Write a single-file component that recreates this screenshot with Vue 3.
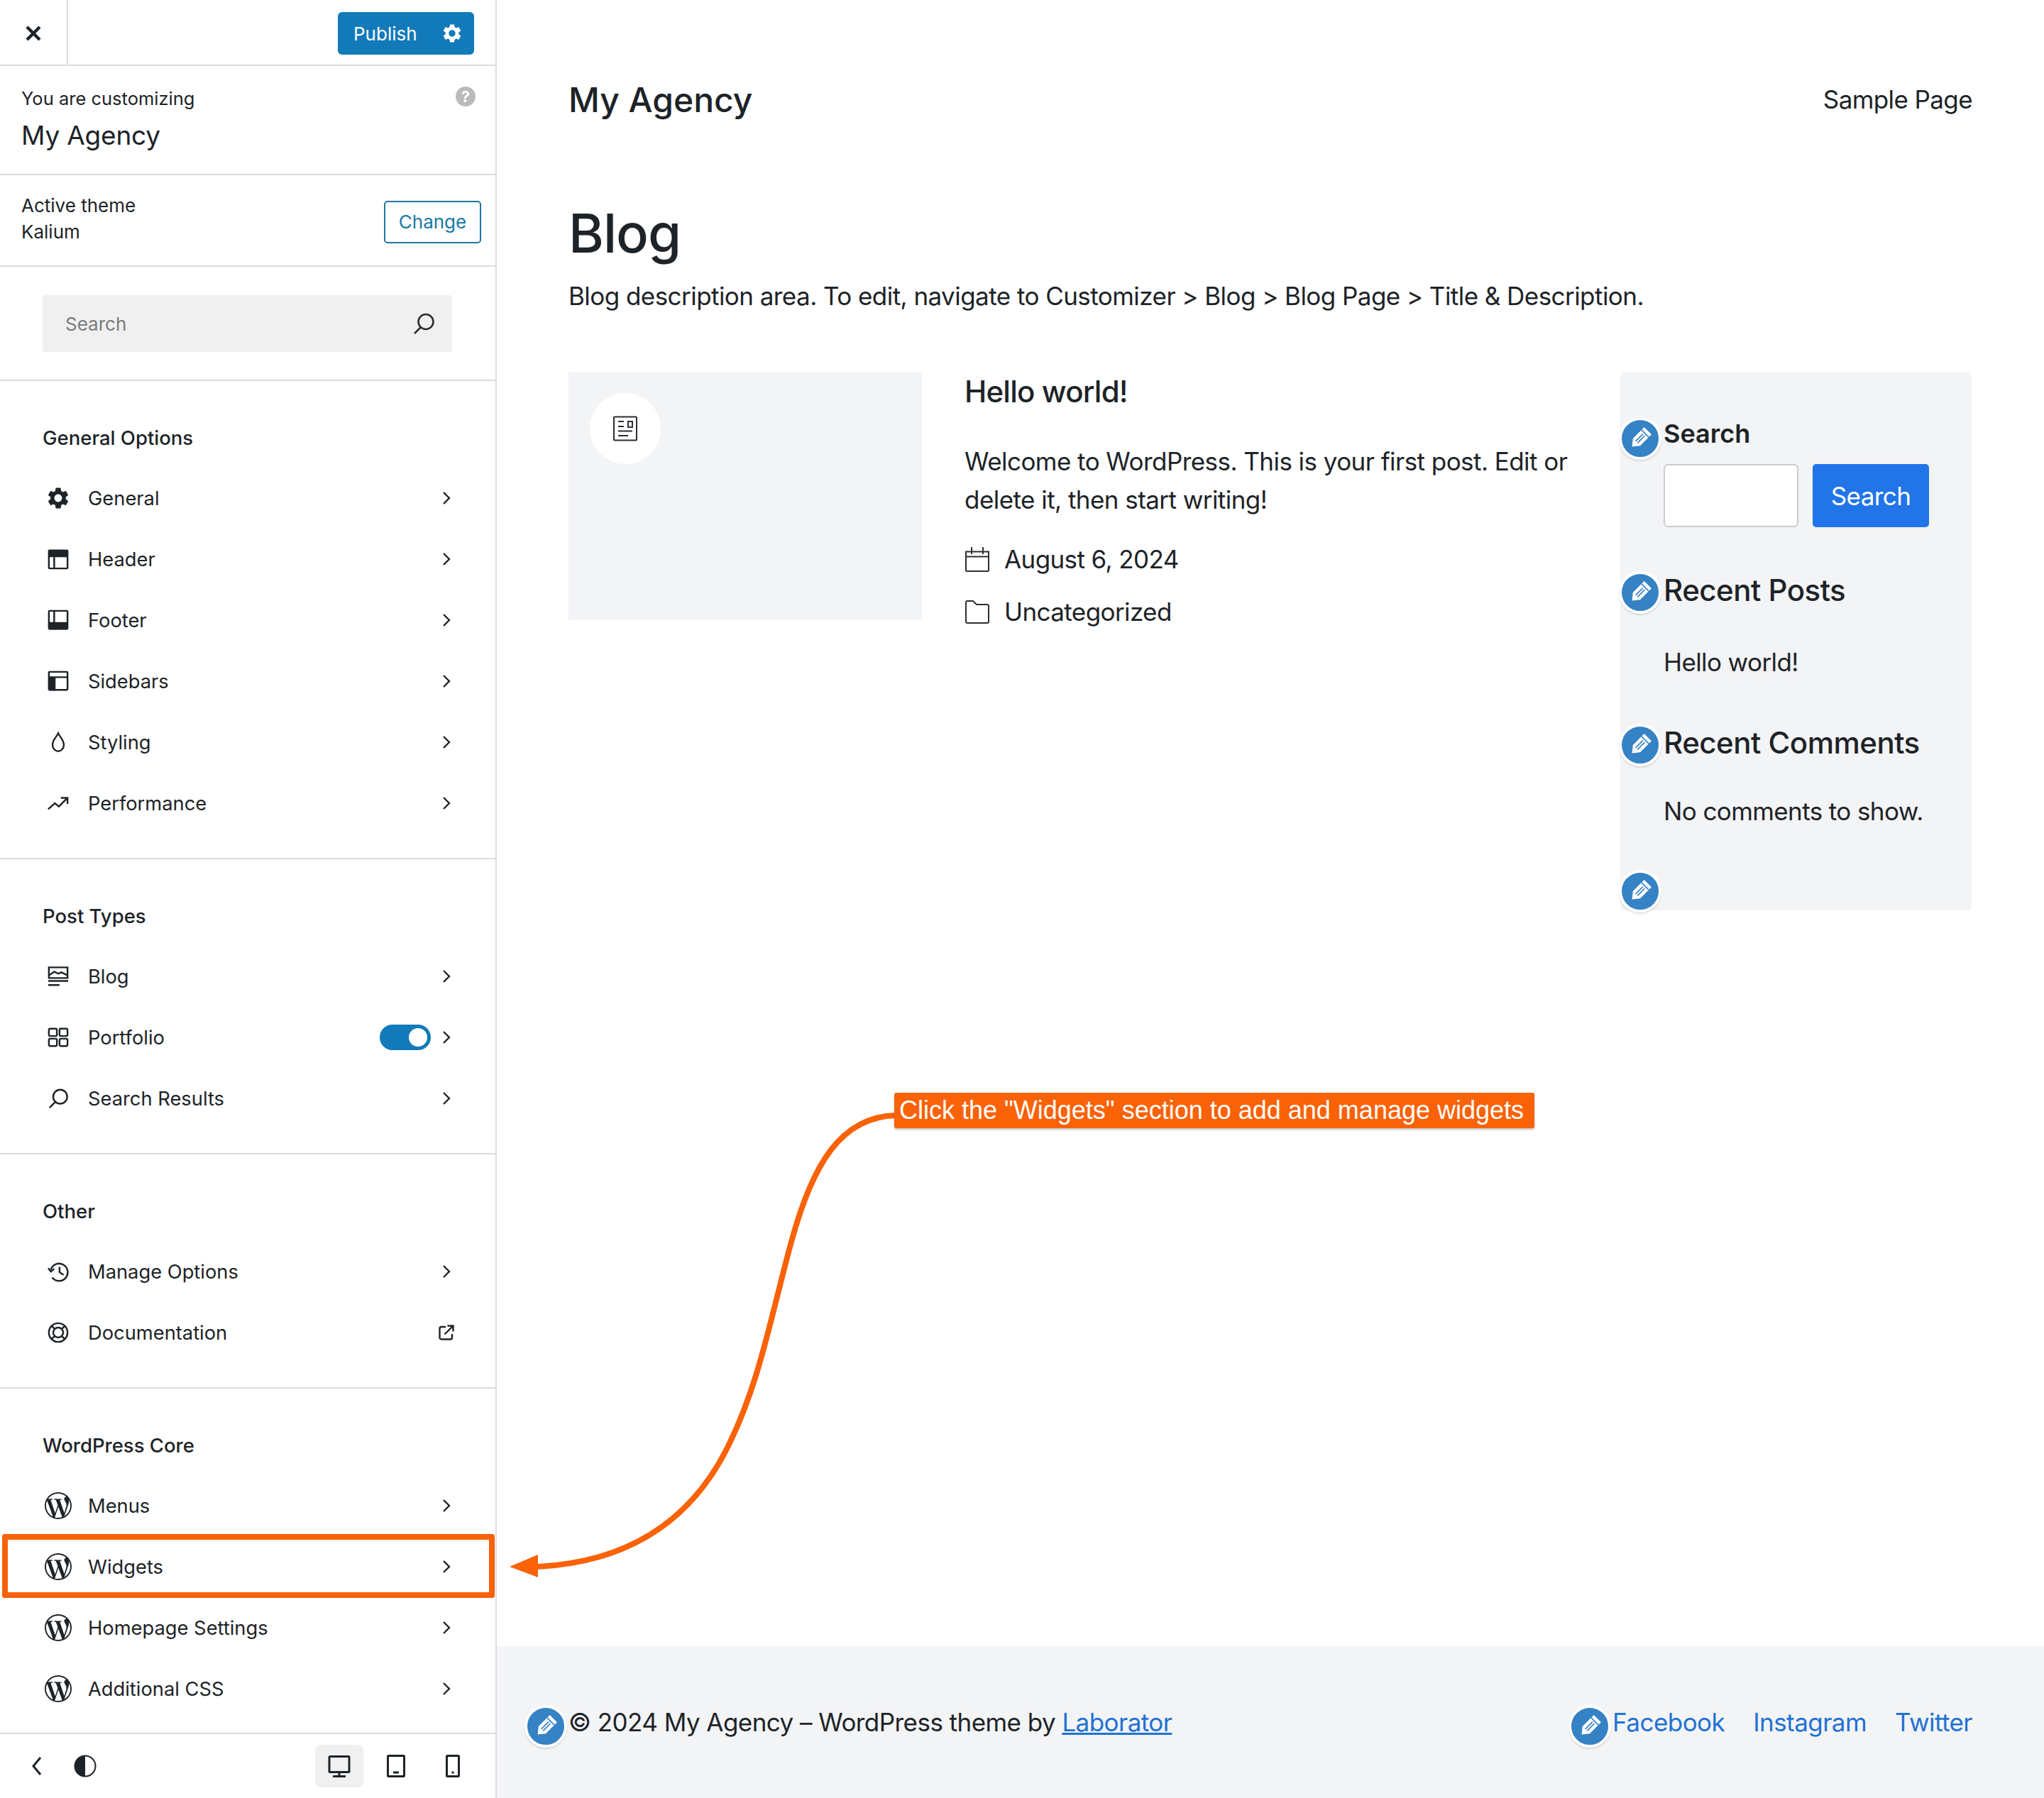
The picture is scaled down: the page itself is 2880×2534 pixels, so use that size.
<script setup>
const wp = 'M21.469 6.825c.84 1.537 1.318 3.3 1.318 5.175 0 3.979-2.156 7.456-5.363 9.325l3.295-9.527c.615-1.54.82-2.771.82-3.864 0-.405-.026-.78-.07-1.11m-7.981.105c.647-.03 1.232-.105 1.232-.105.582-.075.514-.93-.067-.899 0 0-1.755.135-2.88.135-1.064 0-2.85-.15-2.85-.15-.585-.03-.661.855-.075.885 0 0 .54.061 1.125.09l1.68 4.605-2.37 7.08L5.354 6.9c.649-.03 1.234-.1 1.234-.1.585-.075.516-.93-.065-.896 0 0-1.746.138-2.874.138-.2 0-.438-.008-.69-.015C4.911 3.15 8.235 1.215 12 1.215c2.809 0 5.365 1.072 7.286 2.833-.046-.003-.091-.009-.141-.009-1.06 0-1.812.923-1.812 1.914 0 .89.513 1.643 1.06 2.531.411.72.89 1.643.89 2.977 0 .915-.354 1.994-.821 3.479l-1.075 3.585-3.9-11.61.001.014zM12 22.784c-1.059 0-2.081-.153-3.048-.437l3.237-9.406 3.315 9.087c.024.053.05.101.078.149-1.12.393-2.325.609-3.582.609M1.211 12c0-1.564.336-3.05.935-4.39L7.29 21.709C3.694 19.96 1.212 16.271 1.211 12M12 0C5.385 0 0 5.385 0 12s5.385 12 12 12 12-5.385 12-12S18.615 0 12 0'
const gear = 'M19.14 12.94c.04-.3.06-.61.06-.94 0-.32-.02-.64-.07-.94l2.03-1.58c.18-.14.23-.41.12-.61l-1.92-3.32c-.12-.22-.37-.29-.59-.22l-2.39.96c-.5-.38-1.03-.7-1.62-.94l-.36-2.54c-.04-.24-.24-.41-.48-.41h-3.84c-.24 0-.43.17-.47.41l-.36 2.54c-.59.24-1.13.57-1.62.94l-2.39-.96c-.22-.08-.47 0-.59.22L2.74 8.87c-.12.21-.08.47.12.61l2.03 1.58c-.05.3-.09.63-.09.94s.02.64.07.94l-2.03 1.58c-.18.14-.23.41-.12.61l1.92 3.32c.12.22.37.29.59.22l2.39-.96c.5.38 1.03.7 1.62.94l.36 2.54c.05.24.24.41.48.41h3.84c.24 0 .44-.17.47-.41l.36-2.54c.59-.24 1.13-.56 1.62-.94l2.39.96c.22.08.47 0 .59-.22l1.92-3.32c.12-.22.07-.47-.12-.61l-2.01-1.58zM12 15.6c-1.98 0-3.6-1.62-3.6-3.6s1.62-3.6 3.6-3.6 3.6 1.62 3.6 3.6-1.62 3.6-3.6 3.6z'

// every icon is a 32 box, s = stroked path, f = filled path
const icons = {
  gear: { f: gear, view: '2 2 20 20' },
  header: { s: 'M3 3h26a1 1 0 0 1 1 1v25a1 1 0 0 1-1 1H3a1 1 0 0 1-1-1V4a1 1 0 0 1 1-1zM10 13v17', f: 'M3 2h26a2 2 0 0 1 2 2v9H1V4a2 2 0 0 1 2-2z' },
  footer: { s: 'M3 2h26a1 1 0 0 1 1 1v25a1 1 0 0 1-1 1H3a1 1 0 0 1-1-1V3a1 1 0 0 1 1-1zM10 3v17', f: 'M1 19h30v9a2 2 0 0 1-2 2H3a2 2 0 0 1-2-2z' },
  sidebars: { s: 'M3 2h26a1 1 0 0 1 1 1v25a1 1 0 0 1-1 1H3a1 1 0 0 1-1-1V3a1 1 0 0 1 1-1zM2 10h28', f: 'M1 10h11v20H3a2 2 0 0 1-2-2z' },
  drop: { s: 'M16 2.500c2 5 8.500 10 8.500 17.500a8.500 9.500 0 0 1-17 0C7.500 12.500 14 7.500 16 2.500z' },
  trend: { s: 'M1 25l10-9 6 5 12-12M20 8h10v9' },
  blog: { s: 'M2 2.500h28v16H2zM3 14l7-5 6 3 5-2 8 4M1 23h30M1 29h17' },
  grid: { s: 'M4 3h8a2 2 0 0 1 2 2v7a2 2 0 0 1-2 2H4a2 2 0 0 1-2-2V5a2 2 0 0 1 2-2zM20 3h8a2 2 0 0 1 2 2v7a2 2 0 0 1-2 2h-8a2 2 0 0 1-2-2V5a2 2 0 0 1 2-2zM4 18h8a2 2 0 0 1 2 2v7a2 2 0 0 1-2 2H4a2 2 0 0 1-2-2v-7a2 2 0 0 1 2-2zM20 18h8a2 2 0 0 1 2 2v7a2 2 0 0 1-2 2h-8a2 2 0 0 1-2-2v-7a2 2 0 0 1 2-2z' },
  search: { s: 'M19 3a10.500 10.500 0 1 1 0 21 10.500 10.500 0 0 1 0-21zM11.500 21.500L3 30' },
  history: { s: 'M5 13A13 13 0 1 1 7 25M18 9v8l6 4M1 11l4 5 5-4' },
  help: { s: 'M16 2a14 14 0 1 1 0 28 14 14 0 0 1 0-28zM16 8.500a7.500 7.500 0 1 1 0 15 7.500 7.500 0 0 1 0-15zM6.500 6.500l4 4M25.500 6.500l-4 4M6.500 25.500l4-4M25.500 25.500l-4-4' },
  wp: { f: wp, view: '0 0 24 24' }
}

const sections = [
  { title: 'General Options', rows: [
    { label: 'General', icon: 'gear' },
    { label: 'Header', icon: 'header' },
    { label: 'Footer', icon: 'footer' },
    { label: 'Sidebars', icon: 'sidebars' },
    { label: 'Styling', icon: 'drop' },
    { label: 'Performance', icon: 'trend' }
  ] },
  { title: 'Post Types', rows: [
    { label: 'Blog', icon: 'blog' },
    { label: 'Portfolio', icon: 'grid', toggle: true },
    { label: 'Search Results', icon: 'search' }
  ] },
  { title: 'Other', rows: [
    { label: 'Manage Options', icon: 'history' },
    { label: 'Documentation', icon: 'help', external: true }
  ] },
  { title: 'WordPress Core', last: true, rows: [
    { label: 'Menus', icon: 'wp' },
    { label: 'Widgets', icon: 'wp' },
    { label: 'Homepage Settings', icon: 'wp' },
    { label: 'Additional CSS', icon: 'wp' }
  ] }
]
</script>

<template>
  <div class="page">
    <aside class="panel">
      <div class="topbar">
        <div class="close">
          <svg viewBox="0 0 24 24" width="24" height="24"><path d="M3 3l18 18M21 3L3 21" stroke="#1d2327" stroke-width="4.500" fill="none" /></svg>
        </div>
        <button class="publish">
          <span>Publish</span>
          <svg viewBox="2 2 20 20" width="26" height="26"><path :d="gear" fill="#fff" fill-rule="evenodd" /></svg>
        </button>
      </div>

      <div class="site-info">
        <div>
          <div class="site-small">You are customizing</div>
          <div class="site-title">My Agency</div>
        </div>
        <span class="help">?</span>
      </div>

      <div class="theme-info">
        <div class="theme-text">Active theme<br />Kalium</div>
        <button class="change">Change</button>
      </div>

      <div class="search-wrap">
        <div class="search-box">
          <input class="search-input" placeholder="Search" />
          <svg viewBox="0 0 32 32" width="32" height="32"><path :d="icons.search.s" fill="none" stroke="#2b2f33" stroke-width="2.600" /></svg>
        </div>
      </div>

      <section v-for="sec in sections" :key="sec.title" class="group" :class="{ last: sec.last }">
        <h4 class="group-title">{{ sec.title }}</h4>
        <div v-for="row in sec.rows" :key="row.label" class="row">
          <svg class="row-icon" :class="{ wp: row.icon === 'wp' }" :viewBox="icons[row.icon].view || '0 0 32 32'">
            <path v-if="icons[row.icon].f" :d="icons[row.icon].f" fill="#1d2327" fill-rule="evenodd" />
            <path v-if="icons[row.icon].s" :d="icons[row.icon].s" fill="none" stroke="#1d2327" stroke-width="2.600" />
          </svg>
          <span class="row-label">{{ row.label }}</span>
          <span v-if="row.toggle" class="toggle"><i></i></span>
          <svg v-if="row.external" class="row-end" viewBox="0 0 24 24" width="24" height="24">
            <path d="M11 4H5a2.500 2.500 0 0 0-2.500 2.500V19A2.500 2.500 0 0 0 5 21.500h12.500A2.500 2.500 0 0 0 20 19v-5M9.500 14.500L21 3M13.500 2.500H21.500V10.500" fill="none" stroke="#1d2327" stroke-width="2.400" />
          </svg>
          <svg v-else class="row-end" viewBox="0 0 24 24" width="24" height="24">
            <path d="M8 4l8 8-8 8" fill="none" stroke="#1d2327" stroke-width="2.400" />
          </svg>
        </div>
      </section>

      <div class="bottombar">
        <svg viewBox="0 0 16 32" width="16" height="32"><path d="M13 4L3 16l10 12" fill="none" stroke="#1d2327" stroke-width="3" /></svg>
        <svg class="contrast" viewBox="0 0 32 32" width="32" height="32">
          <circle cx="16" cy="16" r="14.500" fill="#fff" stroke="#1d2327" stroke-width="2" />
          <path d="M16 1.500a14.500 14.500 0 0 0 0 29z" fill="#1d2327" />
        </svg>
        <div class="devices">
          <span class="device active">
            <svg viewBox="0 0 32 32" width="32" height="32"><path d="M3 2.500h26a1 1 0 0 1 1 1v20a1 1 0 0 1-1 1H3a1 1 0 0 1-1-1v-20a1 1 0 0 1 1-1zM16 25v5M7 30.500h18" fill="none" stroke="#1d2327" stroke-width="3" /></svg>
          </span>
          <span class="device">
            <svg viewBox="0 0 32 32" width="32" height="32"><path d="M5.500 1.500h21a1 1 0 0 1 1 1v27a1 1 0 0 1-1 1h-21a1 1 0 0 1-1-1v-27a1 1 0 0 1 1-1zM12 25h8" fill="none" stroke="#1d2327" stroke-width="3" /></svg>
          </span>
          <span class="device">
            <svg viewBox="0 0 32 32" width="32" height="32"><path d="M8.500 1.500h15a1 1 0 0 1 1 1v27a1 1 0 0 1-1 1h-15a1 1 0 0 1-1-1v-27a1 1 0 0 1 1-1zM14.500 25h3" fill="none" stroke="#1d2327" stroke-width="3" /></svg>
          </span>
        </div>
      </div>
    </aside>

    <main class="site">
      <div class="site-body">
        <header class="site-head">
          <div class="brand">My Agency</div>
          <div class="nav">Sample Page</div>
        </header>
        <h1 class="blog-title">Blog</h1>
        <p class="blog-desc">Blog description area. To edit, navigate to Customizer &gt; Blog &gt; Blog Page &gt; Title &amp; Description.</p>

        <div class="content">
          <div class="thumb">
            <span class="thumb-badge">
              <svg viewBox="0 0 36 36" width="36" height="36">
                <path d="M3 1.500h30a1 1 0 0 1 1 1v31a1 1 0 0 1-1 1H3a1 1 0 0 1-1-1v-31a1 1 0 0 1 1-1zM8 8h8M8 15h8M22 8h6v8h-6zM8 21.500h20M8 28h14" fill="none" stroke="#2b2f33" stroke-width="2" />
              </svg>
            </span>
          </div>

          <article class="post">
            <h2 class="post-title">Hello world!</h2>
            <p class="post-text">Welcome to WordPress. This is your first post. Edit or delete it, then start writing!</p>
            <div class="meta">
              <svg viewBox="0 0 36 36" width="36" height="36"><path d="M2 7.500h32V34a1 1 0 0 1-1 1H3a1 1 0 0 1-1-1zM2 14.500h32M10 1v10M26 1v10" fill="none" stroke="#2b2f33" stroke-width="2" /></svg>
              <span>August 6, 2024</span>
            </div>
            <div class="meta second">
              <svg viewBox="0 0 36 36" width="36" height="36"><path d="M2 5a2 2 0 0 1 2-2h8l5 5h15a2 2 0 0 1 2 2v22a2 2 0 0 1-2 2H4a2 2 0 0 1-2-2z" fill="none" stroke="#2b2f33" stroke-width="2" /></svg>
              <span>Uncategorized</span>
            </div>
          </article>

          <aside class="widgets">
            <div class="widget search-widget">
              <span class="pencil"><svg viewBox="0 0 20 20" width="36" height="36"><g transform="rotate(45 10 10)"><path d="M6 1.500h8v12.500l-4 5-4-5z" fill="#fff" /><path d="M6 4.500h8M9 6v8M11 6v8" stroke="#3582c4" stroke-width=".9" /></g></svg></span>
              <div class="widget-small">Search</div>
              <div class="widget-form">
                <input class="widget-input" />
                <button class="widget-btn">Search</button>
              </div>
            </div>
            <div class="widget posts-widget">
              <span class="pencil"><svg viewBox="0 0 20 20" width="36" height="36"><g transform="rotate(45 10 10)"><path d="M6 1.500h8v12.500l-4 5-4-5z" fill="#fff" /><path d="M6 4.500h8M9 6v8M11 6v8" stroke="#3582c4" stroke-width=".9" /></g></svg></span>
              <h3 class="widget-title">Recent Posts</h3>
              <p class="widget-text">Hello world!</p>
            </div>
            <div class="widget comments-widget">
              <span class="pencil"><svg viewBox="0 0 20 20" width="36" height="36"><g transform="rotate(45 10 10)"><path d="M6 1.500h8v12.500l-4 5-4-5z" fill="#fff" /><path d="M6 4.500h8M9 6v8M11 6v8" stroke="#3582c4" stroke-width=".9" /></g></svg></span>
              <h3 class="widget-title">Recent Comments</h3>
              <p class="widget-text tight">No comments to show.</p>
            </div>
            <span class="pencil end"><svg viewBox="0 0 20 20" width="36" height="36"><g transform="rotate(45 10 10)"><path d="M6 1.500h8v12.500l-4 5-4-5z" fill="#fff" /><path d="M6 4.500h8M9 6v8M11 6v8" stroke="#3582c4" stroke-width=".9" /></g></svg></span>
          </aside>
        </div>
      </div>

      <footer class="site-foot">
        <div class="copy">
          <span class="pencil"><svg viewBox="0 0 20 20" width="36" height="36"><g transform="rotate(45 10 10)"><path d="M6 1.500h8v12.500l-4 5-4-5z" fill="#fff" /><path d="M6 4.500h8M9 6v8M11 6v8" stroke="#3582c4" stroke-width=".9" /></g></svg></span>
          © 2024 My Agency – WordPress theme by <a class="under">Laborator</a>
        </div>
        <div class="links">
          <span class="pencil"><svg viewBox="0 0 20 20" width="36" height="36"><g transform="rotate(45 10 10)"><path d="M6 1.500h8v12.500l-4 5-4-5z" fill="#fff" /><path d="M6 4.500h8M9 6v8M11 6v8" stroke="#3582c4" stroke-width=".9" /></g></svg></span>
          <a>Facebook</a>
          <a>Instagram</a>
          <a>Twitter</a>
        </div>
      </footer>
    </main>

    <!-- tutorial markup drawn on top of the screenshot -->
    <div class="mark-box"></div>
    <svg class="mark-arrow" viewBox="0 0 2880 2534" width="2880" height="2534">
      <path d="M1262 1572C1185 1574 1145 1640 1115 1750C1085 1860 1070 1950 1025 2040C975 2140 890 2202 755 2208" fill="none" stroke="#fa6207" stroke-width="8" />
      <path d="M718 2208L758 2191V2223z" fill="#fa6207" />
    </svg>
    <div class="mark-label">Click the "Widgets" section to add and manage widgets</div>
  </div>
</template>

<style scoped>
.page {
  position: relative;
  display: flex;
  width: 2880px;
  height: 2534px;
  overflow: hidden;
  background: #fff;
  color: #1d2327;
  font-family: Inter, "Noto Sans", sans-serif;
}

/* customizer panel */
.panel {
  display: flex;
  flex-direction: column;
  flex: none;
  width: 700px;
  box-sizing: border-box;
  border-right: 2px solid #dcdcde;
}
.topbar {
  display: flex;
  align-items: center;
  justify-content: space-between;
  height: 93px;
  box-sizing: border-box;
  padding-right: 30px;
  border-bottom: 2px solid #dcdcde;
}
.close {
  display: flex;
  align-items: center;
  justify-content: center;
  width: 94px;
  height: 91px;
  border-right: 2px solid #dcdcde;
}
.close svg {
  margin-top: 2px;
}
.publish {
  display: flex;
  align-items: center;
  justify-content: space-between;
  width: 192px;
  height: 60px;
  margin-top: 3px;
  padding: 0 18px 0 22px;
  border: 0;
  border-radius: 6px;
  background: #127ab9;
  color: #fff;
  font: 26px Inter, sans-serif;
}
.site-info {
  display: flex;
  justify-content: space-between;
  height: 154px;
  box-sizing: border-box;
  padding: 30px 28px 0 30px;
  border-bottom: 2px solid #dcdcde;
}
.site-small {
  font-size: 25.500px;
  line-height: 32px;
}
.site-title {
  margin-top: 12px;
  font-size: 37px;
  line-height: 48px;
  letter-spacing: -0.2px;
}
.help {
  display: flex;
  align-items: center;
  justify-content: center;
  width: 28px;
  height: 28px;
  margin-top: -1px;
  border-radius: 50%;
  background: #bbb;
  color: #fff;
  font-size: 22px;
  font-weight: 700;
}
.theme-info {
  display: flex;
  align-items: center;
  justify-content: space-between;
  height: 129px;
  box-sizing: border-box;
  padding: 0 20px 0 30px;
  border-bottom: 2px solid #dcdcde;
}
.theme-text {
  margin-bottom: 5px;
  font-size: 26px;
  line-height: 37px;
}
.change {
  width: 137px;
  height: 60px;
  margin-top: 4px;
  border: 2px solid #22759e;
  border-radius: 5px;
  background: #fff;
  color: #1879a8;
  font: 26px Inter, sans-serif;
}
.search-wrap {
  height: 161px;
  box-sizing: border-box;
  padding: 40px 61px 0 60px;
  border-bottom: 2px solid #dcdcde;
}
.search-box {
  display: flex;
  align-items: center;
  height: 80px;
  padding: 0 24px 0 32px;
  border-radius: 4px;
  background: #f0f0f0;
}
.search-input {
  flex: 1;
  min-width: 0;
  padding: 0;
  border: 0;
  outline: 0;
  background: none;
  font: 26px Inter, sans-serif;
}
.search-input::placeholder {
  color: #7a7a7a;
  opacity: 1;
}
.group {
  padding: 65px 0 34px;
  border-bottom: 2px solid #dcdcde;
}
.group.last {
  padding-bottom: 19px;
}
.group-title {
  margin: 0 0 27px 60px;
  font-size: 27.500px;
  font-weight: 500;
  line-height: 30px;
}
.row {
  display: flex;
  align-items: center;
  height: 86px;
  padding: 0 57px 0 63px;
  font-size: 27.300px;
}
.row-icon {
  flex: none;
  width: 38px;
  height: 38px;
  padding: 4px;
  box-sizing: border-box;
}
.row-icon.wp {
  padding: 0;
}
.row-label {
  flex: 1;
  margin-left: 23px;
}
.toggle {
  display: flex;
  align-items: center;
  justify-content: flex-end;
  width: 72px;
  height: 36px;
  box-sizing: border-box;
  margin-right: 10px;
  padding-right: 5px;
  border-radius: 18px;
  background: #127ab9;
}
.toggle i {
  width: 26px;
  height: 26px;
  border-radius: 50%;
  background: #fff;
}
.row-end {
  flex: none;
}
.bottombar {
  display: flex;
  flex: 1;
  align-items: center;
  padding: 0 26px 0 44px;
}
.contrast {
  margin-left: 44px;
}
.devices {
  display: flex;
  gap: 12px;
  margin-left: auto;
}
.device {
  display: flex;
  align-items: center;
  justify-content: center;
  width: 68px;
  height: 60px;
  border-radius: 8px;
}
.device.active {
  background: #f0f0f1;
}

/* site preview */
.site {
  display: flex;
  flex-direction: column;
  flex: 1;
  min-width: 0;
}
.site-body {
  flex: 1;
  padding: 0 101px 0 101px;
}
.site-head {
  display: flex;
  align-items: center;
  justify-content: space-between;
  height: 100px;
  margin-top: 90px;
}
.brand {
  font-size: 48px;
  font-weight: 500;
}
.nav {
  font-size: 35px;
  letter-spacing: -0.6px;
}
.blog-title {
  margin: 88px 0 0;
  font-size: 76px;
  font-weight: 500;
  line-height: 100px;
  letter-spacing: -1px;
}
.blog-desc {
  margin: 14px 0 0;
  font-size: 35px;
  line-height: 50px;
  letter-spacing: -0.55px;
}
.content {
  display: grid;
  grid-template-columns: 498px 864px 495px;
  column-gap: 60px;
  align-items: start;
  margin-top: 82px;
}
.thumb {
  height: 350px;
  padding: 30px;
  box-sizing: border-box;
  background: #f3f4f6;
}
.thumb-badge {
  display: flex;
  align-items: center;
  justify-content: center;
  width: 100px;
  height: 100px;
  border-radius: 50%;
  background: #fff;
}
.post-title {
  margin: 0;
  font-size: 42px;
  font-weight: 500;
  line-height: 56px;
  letter-spacing: -0.8px;
}
.post-text {
  margin: 43px 0 0;
  font-size: 35px;
  line-height: 54px;
  letter-spacing: -0.55px;
}
.meta {
  display: flex;
  align-items: center;
  gap: 20px;
  margin-top: 30px;
  font-size: 35px;
  line-height: 54px;
  letter-spacing: -0.6px;
}
.meta.second {
  margin-top: 20px;
}
.widgets {
  position: relative;
  height: 759px;
  box-sizing: border-box;
  padding: 64px 32px 0 61px;
  border-radius: 6px;
  background: #f3f4f6;
}
.widget {
  position: relative;
}
.pencil {
  position: absolute;
  display: flex;
  align-items: center;
  justify-content: center;
  width: 52px;
  height: 52px;
  border: 4px solid #fff;
  border-radius: 50%;
  background: #3582c4;
  box-shadow: 0 2px 2px rgba(0, 0, 0, 0.12);
}
.search-widget .pencil {
  left: -63px;
  top: 0;
}
.widget-small {
  font-size: 36px;
  font-weight: 600;
  line-height: 46px;
}
.widget-form {
  display: flex;
  gap: 20px;
  margin-top: 20px;
}
.widget-input {
  width: 190px;
  height: 89px;
  box-sizing: border-box;
  border: 2px solid #ccc;
  border-radius: 6px;
  background: #fff;
  outline: 0;
}
.widget-btn {
  width: 164px;
  height: 89px;
  border: 0;
  border-radius: 5px;
  background: #2175e8;
  color: #fff;
  font: 35px Inter, sans-serif;
  letter-spacing: -0.6px;
}
.posts-widget {
  margin-top: 61px;
}
.comments-widget {
  margin-top: 59px;
}
.posts-widget .pencil,
.comments-widget .pencil {
  left: -63px;
  top: 1px;
}
.widget-title {
  margin: 0;
  font-size: 42px;
  font-weight: 500;
  line-height: 56px;
  letter-spacing: -0.5px;
}
.widget-text {
  margin: 46px 0 0;
  font-size: 35px;
  line-height: 54px;
  letter-spacing: -0.6px;
}
.widget-text.tight {
  margin-top: 41px;
}
.pencil.end {
  left: -2px;
  top: 702px;
}
.site-foot {
  display: flex;
  align-items: center;
  justify-content: space-between;
  height: 214px;
  padding: 0 101px;
  background: #f3f4f6;
  font-size: 35px;
  letter-spacing: -0.55px;
}
.copy,
.links {
  position: relative;
}
.copy .pencil {
  left: -62px;
  top: -3px;
}
.links {
  display: flex;
  gap: 40px;
  color: #2271d1;
}
.links .pencil {
  left: -62px;
  top: -3px;
}
.under {
  color: #2271d1;
  text-decoration: underline;
}

/* annotation */
.mark-box {
  position: absolute;
  left: 3px;
  top: 2162px;
  width: 694px;
  height: 90px;
  box-sizing: border-box;
  border: 8px solid #fa6207;
  border-radius: 3px;
}
.mark-arrow {
  position: absolute;
  left: 0;
  top: 0;
  pointer-events: none;
}
.mark-label {
  position: absolute;
  left: 1260px;
  top: 1540px;
  width: 902px;
  height: 50px;
  box-sizing: border-box;
  padding-left: 7px;
  border-radius: 3px;
  background: #fa6207;
  box-shadow: 0 2px 3px rgba(0, 0, 0, 0.25);
  color: #fff;
  font: 36px/50px "Liberation Sans", Arial, sans-serif;
  white-space: nowrap;
}
</style>
